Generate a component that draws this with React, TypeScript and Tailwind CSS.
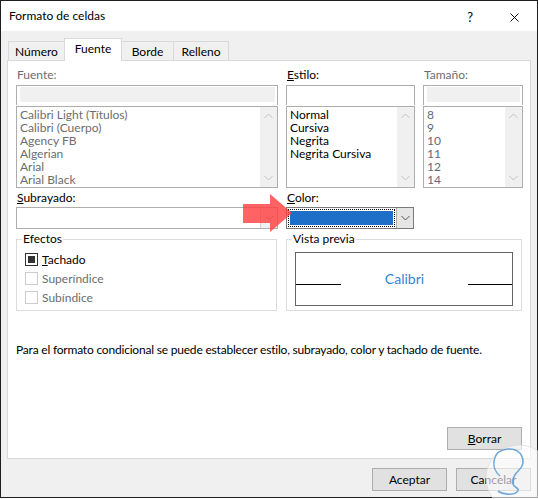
import React from 'react';

const font = "font-['Lato',sans-serif]";

function Chevron({ up = false, color = '#c2c2c2' }: { up?: boolean; color?: string }) {
  return (
    <svg width="9" height="6" viewBox="0 0 9 6">
      <polyline
        points={up ? '0.5,5 4.5,1 8.5,5' : '0.5,1 4.5,5 8.5,1'}
        fill="none"
        stroke={color}
        strokeWidth="1"
      />
    </svg>
  );
}

function Scrollbar() {
  return (
    <div className="flex w-[17px] flex-col items-center justify-between bg-[#f0f0f0] py-[6px]">
      <Chevron up />
      <Chevron />
    </div>
  );
}

function ListBox({
  items,
  className,
  width,
}: {
  items: string[];
  className: string;
  width: string;
}) {
  return (
    <div className={`mt-px flex h-[82px] border border-[#adadad] bg-white ${width}`}>
      <div className={`flex-1 pl-[3px] pt-px text-[12px] leading-[13px] ${className}`}>
        {items.map((it) => (
          <div key={it}>{it}</div>
        ))}
      </div>
      <Scrollbar />
    </div>
  );
}

function Field({ disabled }: { disabled?: boolean }) {
  return (
    <div className="h-[20px] border-x border-t border-[#adadad] bg-white pl-[3px] pr-[2px] pt-px">
      {disabled && <div className="h-[15px] bg-[#f0f0f0]" />}
    </div>
  );
}

function Label({ children, gray }: { children: React.ReactNode; gray?: boolean }) {
  return (
    <div className={`h-[16px] pl-px text-[12px] leading-[16px] ${gray ? 'text-[#6d6d6d]' : 'text-black'}`}>
      {children}
    </div>
  );
}

function Check({ label, checked, letter }: { label: string; checked?: boolean; letter?: boolean }) {
  return (
    <div className="flex h-[19px] items-center">
      <div
        className={`flex h-[13px] w-[13px] items-center justify-center border ${
          checked ? 'border-[#333333]' : 'border-[#cccccc]'
        } bg-white`}
      >
        {checked && <div className="h-[7px] w-[7px] bg-[#333333]" />}
      </div>
      <span className={`ml-[4px] text-[12px] ${checked ? 'text-black' : 'text-[#6d6d6d]'}`}>
        {letter ? (
          <>
            <u>{label[0]}</u>
            {label.slice(1)}
          </>
        ) : (
          label
        )}
      </span>
    </div>
  );
}

function Button({ children }: { children: React.ReactNode }) {
  return (
    <div className="flex h-[23px] w-[75px] items-center justify-center border border-[#adadad] bg-[#e1e1e1] text-[12px] text-black">
      {children}
    </div>
  );
}

export default function App() {
  return (
    <div className={`relative h-[499px] w-[538px] bg-white ${font}`}>
      <div className="flex h-[498px] w-[538px] flex-col border border-[#1f1f1f] bg-[#f0f0f0]">
        {/* Title bar */}
        <div className="flex h-[30px] items-center bg-white pl-[8px] text-[12px] text-black">
          <span>Formato de celdas</span>
          <span className="ml-auto mt-[3px] text-[13px]">?</span>
          <svg className="ml-[37px] mr-[18px] mt-[3px]" width="9" height="9" viewBox="0 0 9 9">
            <path d="M0.5 0.5 L8.5 8.5 M8.5 0.5 L0.5 8.5" stroke="#111" strokeWidth="1" />
          </svg>
        </div>

        <div className="flex flex-1 flex-col px-[6px] pt-[7px]">
          {/* Tabs */}
          <div className="-mb-px flex h-[23px] items-end pl-px text-[12px] text-black">
            <div className="flex h-[20px] w-[56px] items-center justify-center border-l border-t border-[#d9d9d9]">
              Número
            </div>
            <div className="relative z-10 flex h-[23px] w-[58px] items-center justify-center border-x border-t border-[#d9d9d9] bg-white pb-[2px]">
              Fuente
            </div>
            <div className="flex h-[20px] w-[51px] items-center justify-center border-t border-[#d9d9d9]">
              Borde
            </div>
            <div className="flex h-[20px] w-[56px] items-center justify-center border-x border-t border-[#d9d9d9]">
              Relleno
            </div>
          </div>

          {/* Panel */}
          <div className="flex h-[399px] w-[524px] flex-col border border-[#d9d9d9] bg-white pl-[8px] pt-[6px]">
            <div className="flex gap-[8px]">
              <div className="w-[262px]">
                <Label gray>Fuente:</Label>
                <div className="mt-[2px]">
                  <Field disabled />
                </div>
                <ListBox
                  width="w-[262px]"
                  className="text-[#6d6d6d]"
                  items={[
                    'Calibri Light (Títulos)',
                    'Calibri (Cuerpo)',
                    'Agency FB',
                    'Algerian',
                    'Arial',
                    'Arial Black',
                  ]}
                />
              </div>
              <div className="w-[129px]">
                <Label>
                  <u>E</u>stilo:
                </Label>
                <div className="mt-[2px]">
                  <Field />
                </div>
                <ListBox
                  width="w-[129px]"
                  className="text-black"
                  items={['Normal', 'Cursiva', 'Negrita', 'Negrita Cursiva']}
                />
              </div>
              <div className="w-[100px]">
                <Label gray>Tamaño:</Label>
                <div className="mt-[2px]">
                  <Field disabled />
                </div>
                <ListBox
                  width="w-[100px]"
                  className="text-[#5f6b7a]"
                  items={['8', '9', '10', '11', '12', '14']}
                />
              </div>
            </div>

            {/* Subrayado / Color */}
            <div className="mt-[2px] flex gap-[8px]">
              <div className="w-[262px]">
                <Label>
                  <u>S</u>ubrayado:
                </Label>
                <div className="mt-px flex h-[22px] border border-[#adadad] bg-white">
                  <div className="flex-1" />
                  <div className="flex w-[17px] items-center justify-center border-l border-[#d0d0d0] bg-[#f0f0f0]">
                    <Chevron color="#a0a0a0" />
                  </div>
                </div>
              </div>
              <div className="w-[128px]">
                <Label>
                  <u>C</u>olor:
                </Label>
                <div className="mt-px flex h-[22px] border border-[#7a7a7a] bg-white">
                  <div className="flex-1 p-px">
                    <div className="h-full border border-dotted border-black p-px">
                      <div className="h-full bg-[#1e6fc8]" />
                    </div>
                  </div>
                  <div className="flex w-[17px] items-center justify-center border-l border-[#adadad] bg-[#e5e5e5]">
                    <Chevron color="#555555" />
                  </div>
                </div>
              </div>
            </div>

            {/* Efectos / Vista previa */}
            <div className="mt-[2px] flex gap-[9px]">
              <fieldset className="h-[80px] w-[261px] border border-[#dcdcdc] pl-[8px]">
                <legend className="-ml-[3px] h-[16px] px-px text-[12px] leading-[16px] text-black">
                  Efectos
                </legend>
                <div className="pt-[3px]">
                  <Check label="Tachado" checked letter />
                  <Check label="Superíndice" />
                  <Check label="Subíndice" />
                </div>
              </fieldset>
              <fieldset className="h-[80px] w-[236px] border border-[#dcdcdc] pl-[8px]">
                <legend className="-ml-[3px] h-[16px] px-px text-[12px] leading-[16px] text-black">
                  Vista previa
                </legend>
                <div className="mt-[5px] flex h-[54px] w-[218px] border border-[#646464]">
                  <div className="mt-[31px] h-px w-[45px] bg-black" />
                  <div className="mt-[18px] flex-1 text-center text-[14px] leading-[16px] text-[#2f86d6]">
                    Calibri
                  </div>
                  <div className="mt-[31px] h-px w-[44px] bg-black" />
                </div>
              </fieldset>
            </div>

            <p className="mt-[31px] text-[12px] leading-[16px] tracking-[-0.2px] text-black">
              Para el formato condicional se puede establecer estilo, subrayado, color y tachado de fuente.
            </p>

            <div className="mt-auto flex justify-end pb-[8px] pr-[8px]">
              <Button>
                <u>B</u>orrar
              </Button>
            </div>
          </div>

          {/* Footer */}
          <div className="mt-[9px] flex w-[524px] justify-end gap-[9px]">
            <Button>Aceptar</Button>
            <Button>Cancelar</Button>
          </div>
        </div>
      </div>

      {/* Red arrow annotation */}
      <svg className="pointer-events-none absolute left-[240px] top-[190px]" width="56" height="46" viewBox="240 190 56 46">
        <polygon
          points="243,204 270,204 270,194 292,213 270,232 270,223 243,223"
          fill="#ff3c3c"
          fillOpacity="0.8"
        />
      </svg>

      {/* Watermark */}
      <svg className="pointer-events-none absolute left-[480px] top-[440px]" width="58" height="59" viewBox="480 440 58 59">
        <circle cx="519" cy="478" r="33" fill="#ffffff" fillOpacity="0.6" stroke="#d8d8d8" strokeOpacity="0.7" />
        <path
          d="M500 476 C490 468 492 450 508 449 C522 448 527 462 519 470 C514 475 512 480 513 484 C514 488 521 488 517 492 C513 496 502 494 498 491"
          fill="none"
          stroke="#5b9bd5"
          strokeOpacity="0.85"
          strokeWidth="1.6"
        />
      </svg>
    </div>
  );
}
